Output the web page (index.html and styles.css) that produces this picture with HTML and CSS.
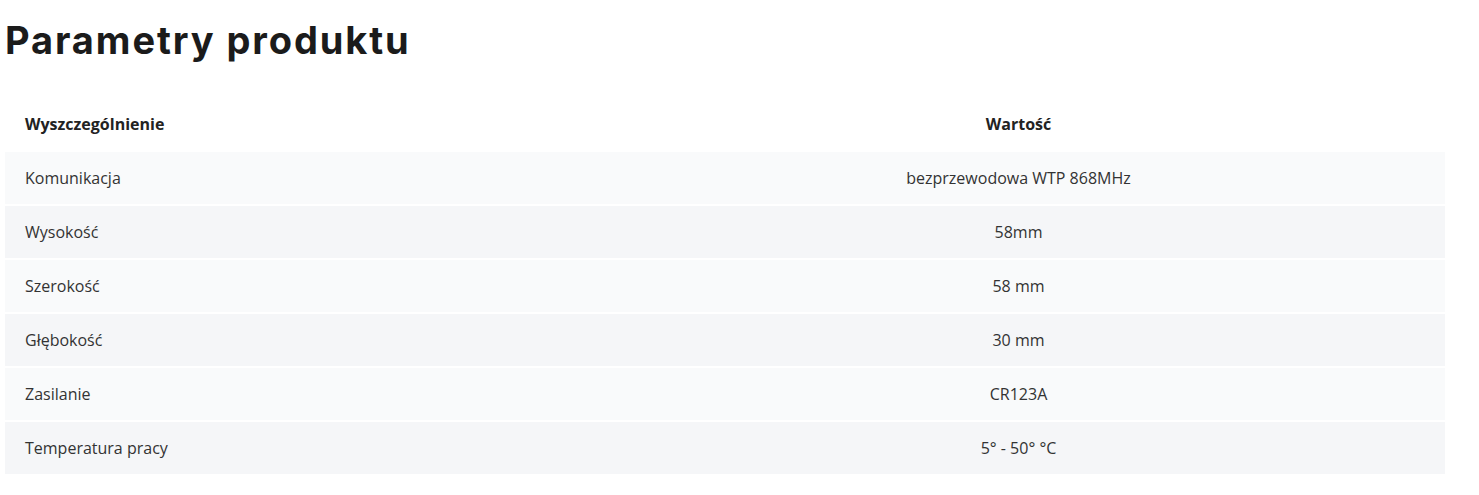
FILE: index.html
```html
<!DOCTYPE html>
<html lang="pl">
<head>
<meta charset="utf-8">
<title>Parametry produktu</title>
<link rel="stylesheet" href="styles.css">
</head>
<body>
<section class="params">
  <h2 class="params-title">Parametry produktu</h2>
  <table class="params-table">
    <thead>
      <tr><th class="col-name">Wyszczególnienie</th><th class="col-value">Wartość</th></tr>
    </thead>
    <tbody>
      <tr><td class="col-name">Komunikacja</td><td class="col-value">bezprzewodowa WTP 868MHz</td></tr>
      <tr><td class="col-name">Wysokość</td><td class="col-value">58mm</td></tr>
      <tr><td class="col-name">Szerokość</td><td class="col-value">58 mm</td></tr>
      <tr><td class="col-name">Głębokość</td><td class="col-value">30 mm</td></tr>
      <tr><td class="col-name">Zasilanie</td><td class="col-value">CR123A</td></tr>
      <tr><td class="col-name">Temperatura pracy</td><td class="col-value">5° - 50° °C</td></tr>
    </tbody>
  </table>
</section>
</body>
</html>
```
FILE: styles.css
```css
html, body {
  margin: 0;
  padding: 0;
  background: #fff;
}
.params {
  padding: 0 34px 0 5px;
  font-family: "Open Sans", "Liberation Sans", sans-serif;
  color: #333;
}
.params-title {
  margin: 0;
  padding-top: 18px;
  font-family: Inter, "Liberation Sans", sans-serif;
  font-weight: 700;
  font-size: 38px;
  line-height: 44px;
  color: #1b1b1b;
  letter-spacing: 1.9px;
}
.params-table {
  width: 100%;
  margin-top: 34px;
  border-collapse: separate;
  border-spacing: 0 2px;
  font-size: 16px;
}
.params-table th,
.params-table td {
  height: 52px;
  padding: 0 20px;
  vertical-align: middle;
}
.params-table th {
  font-weight: 700;
  font-size: 16px;
  color: #222;
}
.params-table .col-name {
  width: 547px;
  text-align: left;
}
.params-table .col-value {
  text-align: center;
}
.params-table tbody tr:nth-child(odd) td {
  background: #f9fafb;
}
.params-table tbody tr:nth-child(even) td {
  background: #f5f6f8;
}
```
